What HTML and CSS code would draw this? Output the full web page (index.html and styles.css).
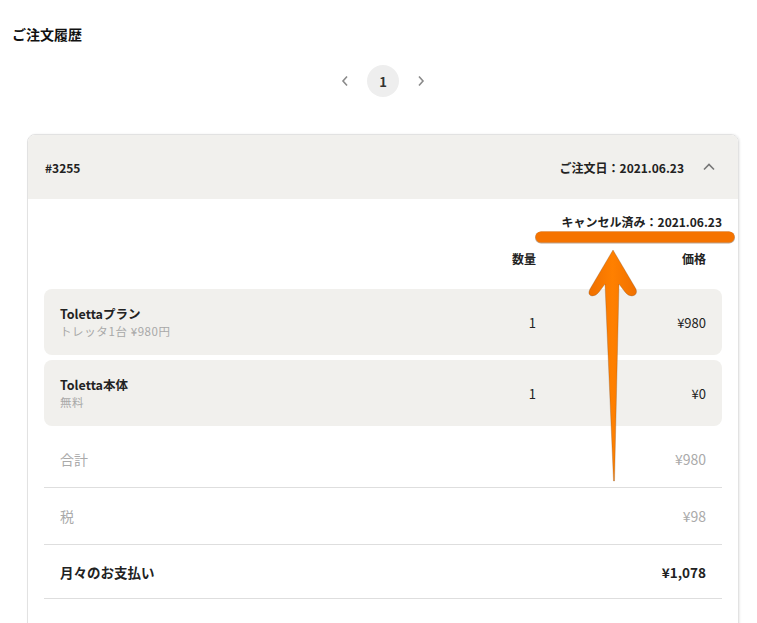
FILE: index.html
```html
<!DOCTYPE html>
<html lang="ja">
<head>
<meta charset="utf-8">
<link rel="stylesheet" href="styles.css">
</head>
<body>
<h1 class="title">ご注文履歴</h1>
<div class="wrap">
  <nav class="pager">
    <span class="arrow">
      <svg width="10" height="12" viewBox="0 0 10 12"><path d="M7 1.5 L3 6 L7 10.5" fill="none" stroke="#8a8a8a" stroke-width="1.6"/></svg>
    </span>
    <span class="page">1</span>
    <span class="arrow">
      <svg width="10" height="12" viewBox="0 0 10 12"><path d="M3 1.5 L7 6 L3 10.5" fill="none" stroke="#8a8a8a" stroke-width="1.6"/></svg>
    </span>
  </nav>
  <section class="card">
    <header class="card-head">
      <span class="order-no">#3255</span>
      <span class="order-date">ご注文日：2021.06.23</span>
      <svg class="chev" width="14" height="10" viewBox="0 0 14 10"><path d="M2 7.5 L7 2.5 L12 7.5" fill="none" stroke="#777" stroke-width="1.6"/></svg>
    </header>
    <div class="card-body">
      <div class="cancel">キャンセル済み：2021.06.23</div>
      <div class="cols">
        <span class="c-qty">数量</span>
        <span class="c-price">価格</span>
      </div>
      <div class="item">
        <div class="item-name">
          <div class="name">Tolettaプラン</div>
          <div class="sub">トレッタ1台 ¥980円</div>
        </div>
        <span class="qty">1</span>
        <span class="price">¥980</span>
      </div>
      <div class="item">
        <div class="item-name">
          <div class="name">Toletta本体</div>
          <div class="sub">無料</div>
        </div>
        <span class="qty">1</span>
        <span class="price">¥0</span>
      </div>
      <div class="sum muted"><span>合計</span><span>¥980</span></div>
      <div class="sum muted"><span>税</span><span>¥98</span></div>
      <div class="sum total"><span>月々のお支払い</span><span>¥1,078</span></div>
    </div>
  </section>
</div>
<svg class="annot" width="757" height="623" viewBox="0 0 757 623">
  <defs>
    <linearGradient id="ag" x1="0" x2="1" y1="0" y2="0">
      <stop offset="0" stop-color="#f07000"/>
      <stop offset="0.5" stop-color="#ff8000"/>
      <stop offset="1" stop-color="#f07000"/>
    </linearGradient>
  </defs>
  <line x1="541" y1="237.5" x2="729" y2="237.5" stroke="#7a4a20" stroke-width="12" stroke-linecap="round" opacity="0.5"/>
  <line x1="541" y1="237" x2="729" y2="237" stroke="#f57300" stroke-width="11" stroke-linecap="round"/>
  <path d="M613 250 L636 289 Q638 295 632 296 Q628 296 625 292 L619 284 L614.5 481 L613.5 481 L605 284 L599 292 Q596 296 592 296 Q587 295 590 289 Z" fill="url(#ag)" stroke="#7a5030" stroke-width="0.6" stroke-opacity="0.5"/>
</svg>
</body>
</html>
```

FILE: styles.css
```css
* { box-sizing: border-box; }
html, body { margin: 0; padding: 0; background: #fff; }
body {
  font-family: "Noto Sans CJK JP", "Noto Sans", sans-serif;
  color: #222;
  width: 757px;
  height: 623px;
  overflow: hidden;
  position: relative;
}
.title {
  margin: 0;
  padding: 23px 0 0 12px;
  font-size: 14px;
  font-weight: 700;
  line-height: 22px;
  color: #111;
}
.wrap {
  margin: 0 18px 0 27px;
}
.pager {
  margin-top: 20px;
  display: flex;
  justify-content: center;
  align-items: center;
  gap: 17px;
  height: 32px;
}
.arrow { display: flex; align-items: center; width: 10px; height: 12px; }
.page {
  width: 32px;
  height: 32px;
  border-radius: 50%;
  background: #eeeeee;
  display: flex;
  align-items: center;
  justify-content: center;
  font-size: 13px;
  font-weight: 700;
  color: #333;
}
.card {
  margin-top: 37px;
  border: 1px solid #e2e2e2;
  border-radius: 8px;
  overflow: hidden;
  box-shadow: 1px 0 2px rgba(0,0,0,0.08);
  height: 520px;
}
.card-head {
  height: 64px;
  background: #f1f0ed;
  display: flex;
  align-items: center;
  padding: 0 22px 0 17px;
  font-size: 12px;
  font-weight: 700;
}
.order-no { flex: 1; }
.order-date { margin-right: 18px; }
.chev { display: block; }
.card-body {
  padding: 13px 16px 0 16px;
}
.cancel {
  text-align: right;
  font-size: 12px;
  font-weight: 700;
  line-height: 20px;
  color: #222;
}
.cols {
  display: grid;
  grid-template-columns: 1fr 60px 170px;
  height: 57px;
  padding: 17px 16px 0;
  font-size: 12px;
  font-weight: 700;
  line-height: 20px;
}
.c-qty { grid-column: 2; text-align: right; }
.c-price { grid-column: 3; text-align: right; }
.item {
  display: grid;
  grid-template-columns: 1fr 60px 170px;
  align-items: center;
  height: 66px;
  background: #f1f0ed;
  border-radius: 8px;
  padding: 0 16px;
  margin-bottom: 5px;
}
.name { font-size: 12.5px; font-weight: 700; line-height: 18px; color: #222; }
.sub { font-size: 11.5px; letter-spacing: 0.6px; color: #a8a8a8; line-height: 17px; }
.qty { text-align: right; font-size: 13px; }
.price { text-align: right; font-size: 13px; }
.sum {
  display: flex;
  justify-content: space-between;
  align-items: center;
  height: 57px;
  padding: 0 16px;
  border-bottom: 1px solid #dedede;
  font-size: 14px;
}
.muted { color: #aaa; }
.total { font-weight: 700; color: #222; height: 54px; font-size: 13.5px; }
.annot { position: absolute; left: 0; top: 0; pointer-events: none; }
```
